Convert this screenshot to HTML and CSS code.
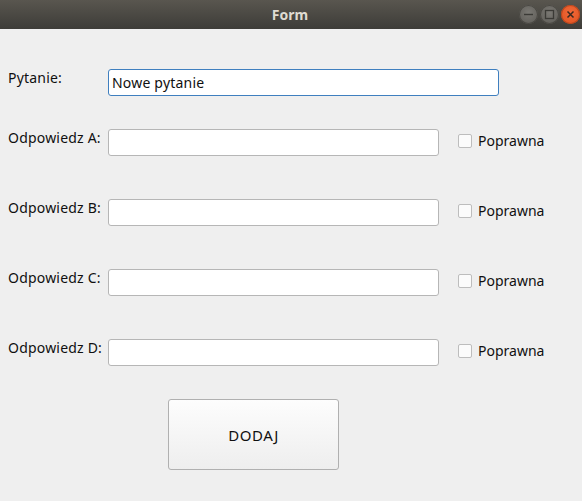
FILE: index.html
```html
<!DOCTYPE html>
<html lang="pl">
<head>
<meta charset="utf-8">
<title>Form</title>
<link rel="stylesheet" href="styles.css">
</head>
<body>
<div class="window">
  <header class="titlebar">
    <span class="title">Form</span>
    <div class="controls">
      <span class="wbtn min"><svg width="19" height="19" viewBox="0 0 19 19"><line x1="5" y1="9.5" x2="14" y2="9.5" stroke="#3b3a36" stroke-width="1.4"/></svg></span>
      <span class="wbtn max"><svg width="19" height="19" viewBox="0 0 19 19"><rect x="5.5" y="5.5" width="8" height="8" fill="none" stroke="#3b3a36" stroke-width="1.3"/></svg></span>
      <span class="wbtn close"><svg width="19" height="19" viewBox="0 0 19 19"><path d="M6.5 6.5 L12.5 12.5 M12.5 6.5 L6.5 12.5" stroke="#3b2a20" stroke-width="1.5"/></svg></span>
    </div>
  </header>
  <main class="form">
    <div class="row first">
      <label class="lbl">Pytanie:</label>
      <input class="field wide focus" type="text" value="Nowe pytanie">
    </div>
    <div class="row answer">
      <label class="lbl">Odpowiedz A:</label>
      <input class="field" type="text">
      <label class="check"><span class="box"></span>Poprawna</label>
    </div>
    <div class="row answer">
      <label class="lbl">Odpowiedz B:</label>
      <input class="field" type="text">
      <label class="check"><span class="box"></span>Poprawna</label>
    </div>
    <div class="row answer">
      <label class="lbl">Odpowiedz C:</label>
      <input class="field" type="text">
      <label class="check"><span class="box"></span>Poprawna</label>
    </div>
    <div class="row answer">
      <label class="lbl">Odpowiedz D:</label>
      <input class="field" type="text">
      <label class="check"><span class="box"></span>Poprawna</label>
    </div>
    <div class="actions">
      <button class="btn" type="button">DODAJ</button>
    </div>
  </main>
</div>
</body>
</html>
```
FILE: styles.css
```css
html, body {
  margin: 0;
  padding: 0;
  background: #efefef;
}
body {
  width: 582px;
  height: 501px;
  overflow: hidden;
  font-family: "Noto Sans", "Open Sans", sans-serif;
  font-size: 14px;
  color: #101010;
}
.window {
  display: flex;
  flex-direction: column;
  height: 501px;
}
.titlebar {
  position: relative;
  height: 29px;
  flex: none;
  background: linear-gradient(#59564f, #3d3c38);
  display: flex;
  align-items: center;
  justify-content: center;
}
.title {
  color: #dfdbd2;
  font-weight: bold;
  font-size: 14px;
  margin-left: -2px;
}
.controls {
  position: absolute;
  right: 2px;
  top: 5px;
  display: flex;
  gap: 2px;
}
.wbtn {
  width: 19px;
  height: 19px;
  border-radius: 50%;
  display: block;
}
.wbtn svg { display: block; }
.min, .max {
  background: radial-gradient(circle at 50% 40%, #7a7873, #5b5954);
  box-shadow: inset 0 0 0 1px #4a4843;
}
.close {
  background: radial-gradient(circle at 50% 40%, #f0693a, #e1501c);
  box-shadow: inset 0 0 0 1px #b8461e;
}
.form {
  padding: 40px 0 0 8px;
  display: flex;
  flex-direction: column;
}
.row {
  display: flex;
  align-items: flex-start;
  height: 26px;
}
.answer { margin-top: 34px; }
.answer + .answer { margin-top: 44px; }
.lbl {
  width: 100px;
  flex: none;
  font-size: 14px;
  letter-spacing: 0.2px;
  line-height: 16px;
  padding-top: 1px;
}
.field {
  box-sizing: border-box;
  width: 331px;
  height: 27px;
  margin: 0;
  padding: 0 3px;
  border: 1px solid #b6b6b6;
  border-radius: 3px;
  background: #ffffff;
  font-family: inherit;
  font-size: 14px;
  letter-spacing: 0.2px;
  color: #101010;
  outline: none;
}
.field.wide { width: 391px; }
.field.focus { border-color: #3f7fbf; }
.check {
  display: flex;
  align-items: center;
  margin-left: 19px;
  margin-top: 4px;
  gap: 6px;
  font-size: 14px;
  line-height: 16px;
}
.box {
  box-sizing: border-box;
  width: 14px;
  height: 14px;
  border: 1px solid #bdbdbd;
  border-radius: 2px;
  background: #fbfbfb;
}
.actions {
  margin-top: 34px;
  padding-left: 160px;
}
.btn {
  box-sizing: border-box;
  width: 171px;
  height: 71px;
  border: 1px solid #b0b0b0;
  border-radius: 3px;
  background: linear-gradient(#fdfdfd, #eeeeee);
  font-family: inherit;
  font-size: 15px;
  letter-spacing: 0.6px;
  color: #101010;
  padding: 0;
}
```
